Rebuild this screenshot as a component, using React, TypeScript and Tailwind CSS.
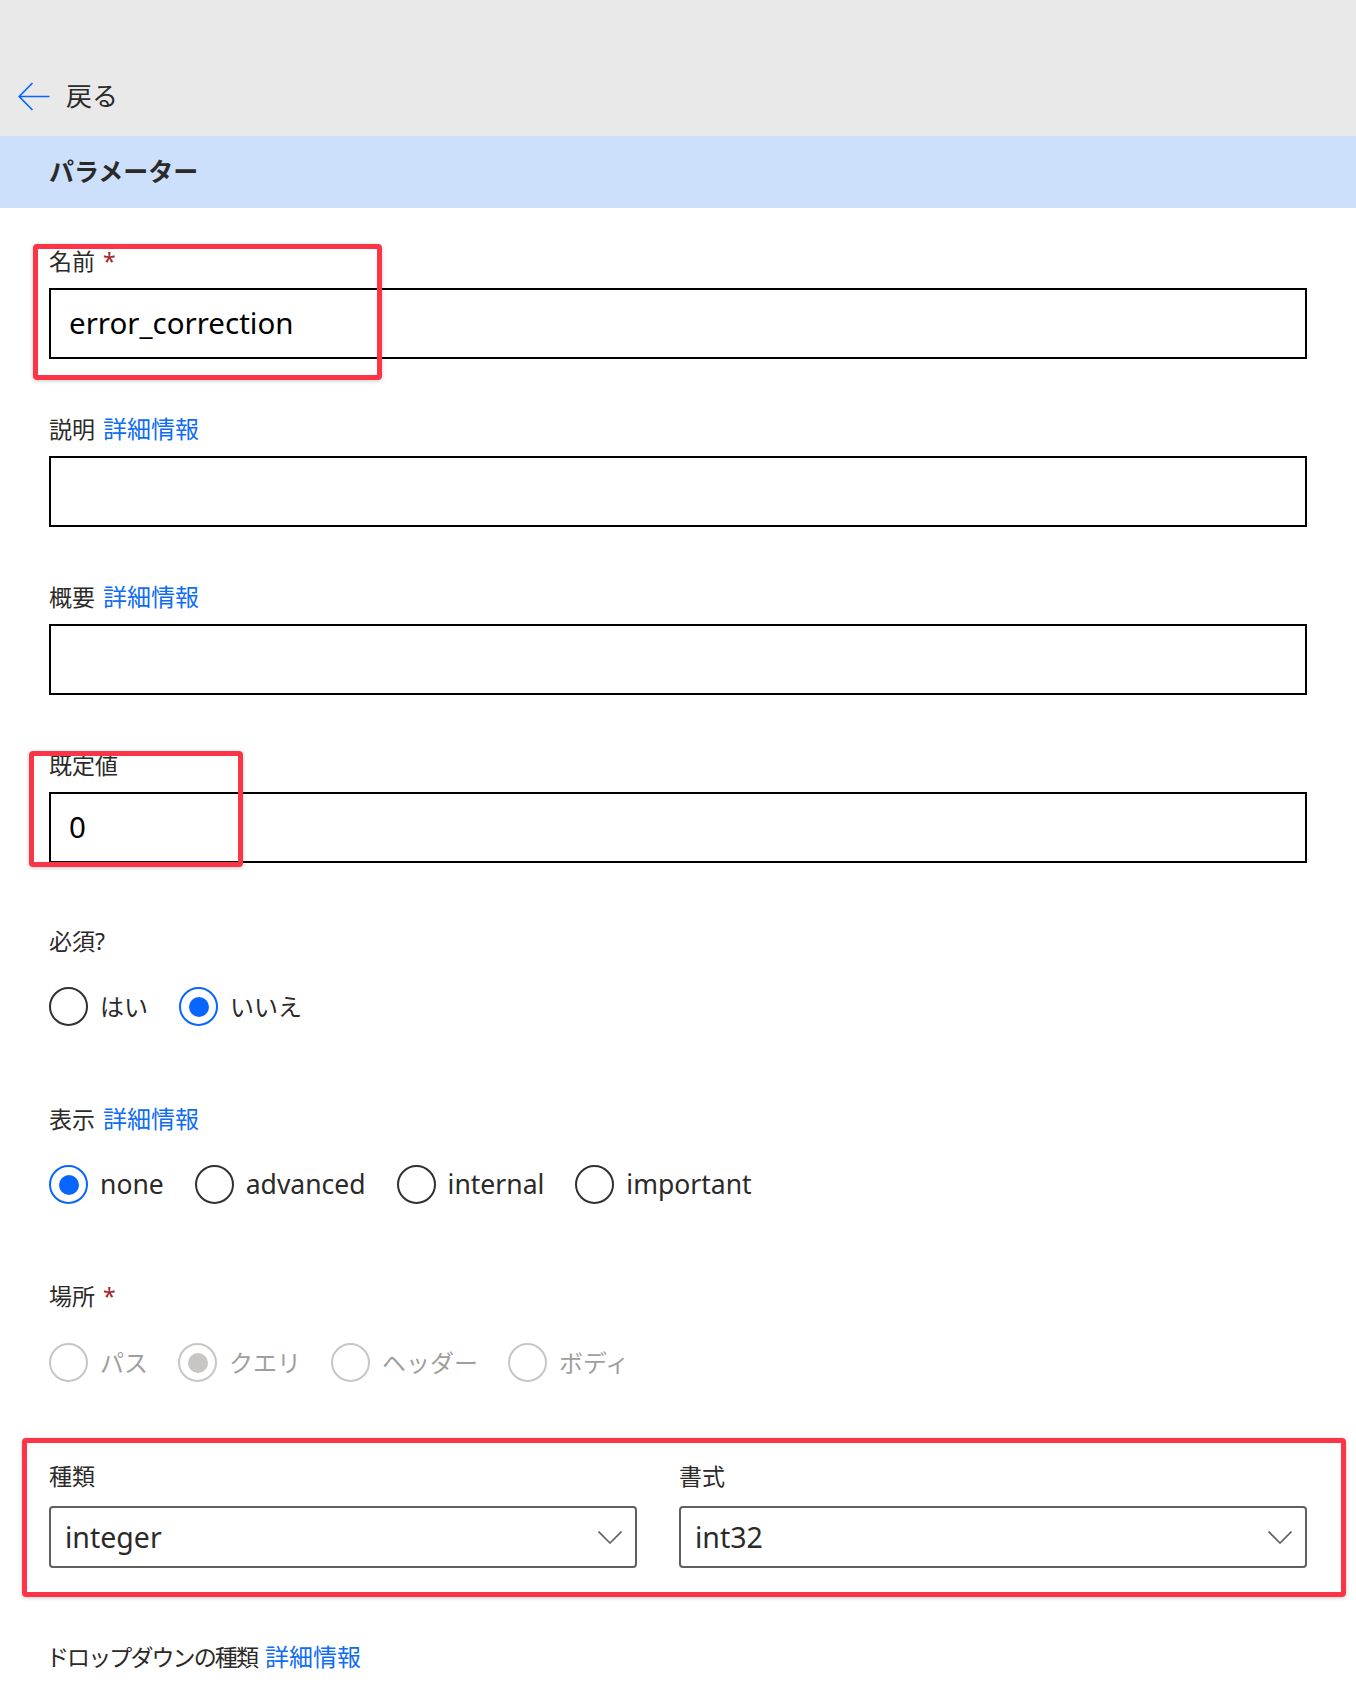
import React from 'react'

const font = "font-['Noto_Sans','Noto_Sans_CJK_JP',sans-serif]"

function Label({ text, required, link, className = "" }: { text: string; required?: boolean; link?: boolean; className?: string }) {
	return (
		<div className={`h-[30px] leading-[30px] text-[23px] text-[#2b2a29] whitespace-nowrap ${className}`}>
			{text}
			{required && <span className="ml-[8px] text-[#a4262c]">*</span>}
			{link && <span className="ml-[8px] text-[24px] tracking-normal text-[#0f6cf5]">詳細情報</span>}
		</div>
	)
}

function TextField({ label, value, required, link, className = "" }: { label: string; value?: string; required?: boolean; link?: boolean; className?: string }) {
	return (
		<div className={`flex flex-col ${className}`}>
			<Label text={label} required={required} link={link} />
			<div className="mt-[12px] flex h-[71px] items-center border-2 border-black pl-[18px] text-[29.5px] text-black">
				{value}
			</div>
		</div>
	)
}

function Radio({ label, checked, disabled, latin }: { label: string; checked?: boolean; disabled?: boolean; latin?: boolean }) {
	const ring = disabled ? "border-[#c8c6c4]" : checked ? "border-[#0866ff]" : "border-[#323130]"
	const dot = disabled ? "bg-[#c8c6c4]" : "bg-[#0866ff]"
	return (
		<div className="flex items-center">
			<span className={`flex h-[39px] w-[39px] items-center justify-center rounded-full border-2 ${ring}`}>
				{checked && <span className={`h-[20px] w-[20px] rounded-full ${dot}`} />}
			</span>
			<span className={`ml-[12px] whitespace-nowrap ${latin ? "text-[26.5px]" : "text-[24px]"} ${disabled ? "text-[#a19f9d]" : "text-[#2b2a29]"}`}>
				{label}
			</span>
		</div>
	)
}

function Chevron() {
	return (
		<svg width="24" height="13" viewBox="0 0 24 13" fill="none">
			<polyline points="0.5,0.5 12,12 23.5,0.5" stroke="#616161" strokeWidth="1.6" />
		</svg>
	)
}

function Select({ value }: { value: string }) {
	return (
		<div className="flex h-[62px] items-center justify-between rounded-[4px] border-2 border-[#5f5f5f] pl-[14px] pr-[13px] text-[28.5px] text-[#2b2a29]">
			<span>{value}</span>
			<Chevron />
		</div>
	)
}

export default function App() {
	return (
		<div className={`relative min-h-[1704px] w-full bg-white ${font}`}>
			<div className="flex h-[136px] items-center bg-[#e9e9e9] pl-[18px] pt-[56px]">
				<svg width="32" height="29" viewBox="0 0 32 29" fill="none">
					<path d="M31.5 14.5H1.5M14.5 1L1.2 14.5L14.5 28" stroke="#0866ff" strokeWidth="1.7" />
				</svg>
				<span className="ml-[16px] text-[26px] text-[#2b2a29]">戻る</span>
			</div>

			<div className="flex h-[72px] items-center bg-[#cde0fb] pl-[49px]">
				<h1 className="text-[25px] font-bold text-[#2b2a29]">パラメーター</h1>
			</div>

			<div className="flex flex-col px-[49px] pt-[38px]">
				<TextField label="名前" value="error_correction" required />
				<TextField label="説明" link className="mt-[55px]" />
				<TextField label="概要" link className="mt-[55px]" />
				<TextField label="既定値" value="0" className="mt-[55px]" />

				<Label text="必須?" className="mt-[63px]" />
				<div className="mt-[31px] flex h-[39px] items-center gap-[31px]">
					<Radio label="はい" />
					<Radio label="いいえ" checked />
				</div>

				<Label text="表示" link className="mt-[78px]" />
				<div className="mt-[31px] flex h-[39px] items-center gap-[31px]">
					<Radio label="none" checked latin />
					<Radio label="advanced" latin />
					<Radio label="internal" latin />
					<Radio label="important" latin />
				</div>

				<Label text="場所" required className="mt-[77px]" />
				<div className="mt-[32px] flex h-[39px] items-center gap-[30px]">
					<Radio label="パス" disabled />
					<Radio label="クエリ" checked disabled />
					<Radio label="ヘッダー" disabled />
					<Radio label="ボディ" disabled />
				</div>

				<div className="mt-[79px] grid grid-cols-[588px_1fr] gap-x-[42px]">
					<div className="flex flex-col">
						<Label text="種類" />
						<div className="mt-[15px]">
							<Select value="integer" />
						</div>
					</div>
					<div className="flex flex-col">
						<Label text="書式" />
						<div className="mt-[15px]">
							<Select value="int32" />
						</div>
					</div>
				</div>

				<Label text="ドロップダウンの種類" link className="mt-[74px] -ml-[3px] tracking-[-1.9px]" />
			</div>

			{/* annotation boxes drawn over the form */}
			<div className="pointer-events-none absolute left-[33px] top-[244px] h-[136px] w-[349px] rounded-[4px] border-[5px] border-[#fc3446] shadow-[0_1px_4px_rgba(0,0,0,0.2)]" />
			<div className="pointer-events-none absolute left-[29px] top-[751px] h-[116px] w-[214px] rounded-[4px] border-[5px] border-[#fc3446] shadow-[0_1px_4px_rgba(0,0,0,0.2)]" />
			<div className="pointer-events-none absolute left-[22px] top-[1438px] h-[159px] w-[1324px] rounded-[4px] border-[5px] border-[#fc3446] shadow-[0_1px_4px_rgba(0,0,0,0.2)]" />
		</div>
	)
}
